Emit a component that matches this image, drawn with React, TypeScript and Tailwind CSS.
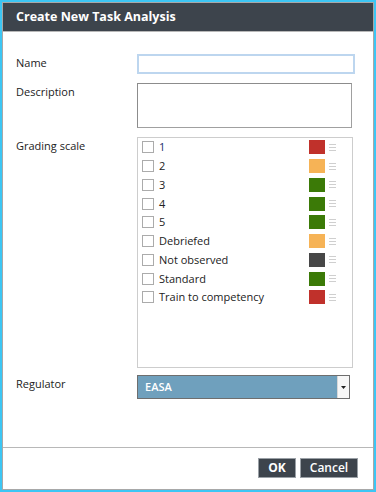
import React from "react";

const items: { label: string; color: string; blue?: boolean }[] = [
  { label: "1", color: "#c0312b", blue: true },
  { label: "2", color: "#f6b356" },
  { label: "3", color: "#3b7a07" },
  { label: "4", color: "#3b7a07" },
  { label: "5", color: "#3b7a07" },
  { label: "Debriefed", color: "#f6b356" },
  { label: "Not observed", color: "#474747" },
  { label: "Standard", color: "#3b7a07" },
  { label: "Train to competency", color: "#c0312b" },
];

function Handle() {
  return (
    <div className="flex flex-col gap-[2px] w-[7px]">
      <div className="h-px bg-[#cfcfcf]" />
      <div className="h-px bg-[#cfcfcf]" />
      <div className="h-px bg-[#cfcfcf]" />
    </div>
  );
}

export default function App() {
  return (
    <div
      className="w-[376px] h-[492px] border-2 border-[#3cc6f4] bg-white flex flex-col"
      style={{ fontFamily: '"Open Sans", "DejaVu Sans", sans-serif' }}
    >
      <div className="flex-1 border border-[#a8a8a8] flex flex-col min-h-0">
        <div className="h-[29px] bg-[#3d444c] border-b border-[#b8b8b8] flex items-center pl-[13px] shrink-0">
          <span className="text-white font-bold text-[12.5px] leading-none">Create New Task Analysis</span>
        </div>
        <div className="flex-1 pl-[13px] pt-[22px] flex flex-col text-[11px] text-[#222] leading-[16px]">
          {/* Name */}
          <div className="flex items-start">
            <div className="w-[121px] mt-px">Name</div>
            <div className="w-[218px] h-[20px] border-2 border-[#bdd6ef] bg-white" />
          </div>
          {/* Description */}
          <div className="flex items-start mt-[9px]">
            <div className="w-[121px] mt-px">Description</div>
            <div className="w-[215px] h-[45px] border border-[#a0a0a0] border-t-[#8c8c8c] border-l-[#8c8c8c] bg-white" />
          </div>
          {/* Grading scale */}
          <div className="flex items-start mt-[9px]">
            <div className="w-[121px] mt-px">Grading scale</div>
            <div className="w-[216px] h-[231px] border border-[#cdcdcd] bg-white pl-[4px]">
              {items.map((it) => (
                <div key={it.label} className="flex items-center h-[18.75px]">
                  <div className="w-[12px] h-[12px] border border-[#ababab] bg-white shrink-0" />
                  <div className={"ml-[5px] w-[150px] " + (it.blue ? "text-[#1d2f6b]" : "text-[#222]")}>{it.label}</div>
                  <div className="w-[16px] h-[14px]" style={{ backgroundColor: it.color }} />
                  <div className="ml-[4px]">
                    <Handle />
                  </div>
                </div>
              ))}
            </div>
          </div>
          {/* Regulator */}
          <div className="flex items-start mt-[7px]">
            <div className="w-[121px] mt-[1px]">Regulator</div>
            <div className="w-[213px] h-[24px] border border-[#6e6e6e] bg-[#6fa0bd] flex items-stretch">
              <div className="flex-1 flex items-center pl-[7px] text-white font-semibold text-[11px]">EASA</div>
              <div className="w-[12px] bg-[#f7f7f7] border-l border-[#d8d8d8] flex items-center justify-center">
                <svg width="5" height="3" viewBox="0 0 5 3">
                  <polygon points="0,0 5,0 2.5,3" fill="#222" />
                </svg>
              </div>
            </div>
          </div>
        </div>
        <div className="h-[42px] border-t border-[#b8b8b8] shrink-0 flex justify-end items-start pt-[10px] pr-[15px] gap-[4px]">
          <button className="w-[38px] h-[20px] bg-[#3d444c] border border-[#9aa0a6] text-white font-bold text-[12px] leading-none">
            OK
          </button>
          <button className="w-[58px] h-[20px] bg-[#3d444c] border border-[#9aa0a6] text-white font-semibold text-[12px] leading-none">
            Cancel
          </button>
        </div>
      </div>
    </div>
  );
}
